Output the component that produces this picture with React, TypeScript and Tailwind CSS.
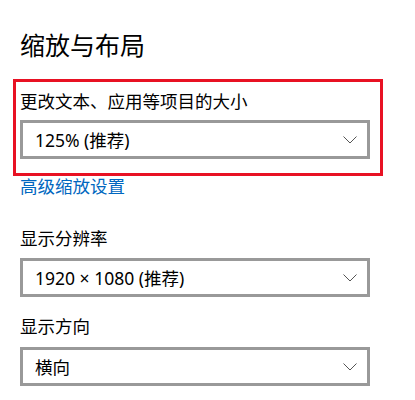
const font = { fontFamily: '"Noto Sans", "Noto Sans CJK SC", sans-serif' };

function Chevron() {
  return (
    <svg width="14" height="8" viewBox="0 0 14 8" fill="none" className="shrink-0">
      <polyline points="0.5,0.5 7,7 13.5,0.5" stroke="#555" strokeWidth="1" />
    </svg>
  );
}

function Dropdown({ value }: { value: string }) {
  return (
    <div className="flex h-[39px] w-[350px] items-center justify-between border-[3px] border-[#999999] bg-white pl-3 pr-[10px]">
      <span className="text-[17.5px] leading-[24px] text-black">{value}</span>
      <Chevron />
    </div>
  );
}

export default function App() {
  return (
    <div className="h-[400px] w-[415px] overflow-hidden bg-white pl-5 pt-[28px]" style={font}>
      <h1 className="text-[25px] font-normal leading-[34px] text-black">缩放与布局</h1>

      {/* highlighted setting */}
      <div className="-ml-[7px] mt-[17px] w-[370px] border-[3px] border-[#e81123] pb-[14px] pl-1 pt-[7px]">
        <div className="mb-[7px] text-[17.5px] leading-[24px] text-black">更改文本、应用等项目的大小</div>
        <Dropdown value="125% (推荐)" />
      </div>

      <a href="#" className="block text-[17.5px] leading-[20px] text-[#0067c0]">
        高级缩放设置
      </a>

      <div className="mb-2 mt-[30px] text-[17.5px] leading-[24px] text-black">显示分辨率</div>
      <Dropdown value="1920 × 1080 (推荐)" />

      <div className="mb-[9px] mt-[17px] text-[17.5px] leading-[24px] text-black">显示方向</div>
      <Dropdown value="横向" />
    </div>
  );
}
